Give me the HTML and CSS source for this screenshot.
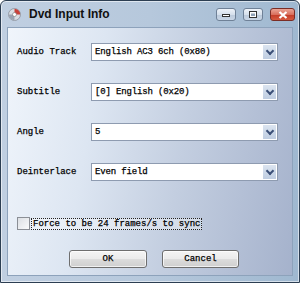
FILE: index.html
```html
<!DOCTYPE html>
<html lang="en">

<head>
    <meta charset="UTF-8">
    <meta name="viewport" content="width=device-width, initial-scale=1.0">
    <title>Dvd Input Info</title>
    <link rel="stylesheet" href="styles.css">
</head>

<body>
    <div class="window">
        <div class="titlebar">
            <svg class="app-icon" width="13" height="13" viewBox="0 0 13 13">
                <circle cx="6.5" cy="6.5" r="6" fill="#d9dde3" stroke="#8a8f99" stroke-width="0.8"/>
                <path d="M6.5 0.8 A5.7 5.7 0 0 1 12.2 6.5 L6.5 6.5 Z" fill="#c8413a"/>
                <path d="M6.5 12.2 A5.7 5.7 0 0 1 0.8 6.5 L6.5 6.5 Z" fill="#9aa3b2"/>
                <circle cx="6.5" cy="6.5" r="2" fill="#fff" stroke="#777" stroke-width="0.6"/>
            </svg>
            <span class="title">Dvd Input Info</span>
            <div class="caption-buttons">
                <span class="cap-btn">
                    <svg width="8" height="6" viewBox="0 0 8 6"><rect x="0.5" y="2.5" width="7" height="2" fill="#fff" stroke="#333" stroke-width="1"/></svg>
                </span>
                <span class="cap-btn">
                    <svg width="8" height="7" viewBox="0 0 8 7"><rect x="0.5" y="0.5" width="7" height="6" fill="#fff" stroke="#333" stroke-width="1"/><rect x="2" y="2.5" width="4" height="2.5" fill="#8fa2b8"/></svg>
                </span>
                <span class="cap-btn close">
                    <svg width="10" height="8" viewBox="0 0 10 8"><path d="M1.5 1 L8.5 7 M8.5 1 L1.5 7" stroke="#fff" stroke-width="2.2"/></svg>
                </span>
            </div>
        </div>

        <div class="client">
            <div class="fields">
                <label>Audio Track</label>
                <div class="combo"><span>English AC3 6ch (0x80)</span><span class="arrow"></span></div>

                <label>Subtitle</label>
                <div class="combo"><span>[0] English (0x20)</span><span class="arrow"></span></div>

                <label>Angle</label>
                <div class="combo"><span>5</span><span class="arrow"></span></div>

                <label>Deinterlace</label>
                <div class="combo"><span>Even field</span><span class="arrow"></span></div>
            </div>

            <div class="check-row">
                <span class="checkbox"></span>
                <span class="check-label">Force to be 24 frames/s to sync</span>
            </div>

            <div class="buttons">
                <button type="button" class="btn">OK</button>
                <button type="button" class="btn cancel">Cancel</button>
            </div>
        </div>
    </div>
</body>

</html>
```

FILE: styles.css
```css
body {
    margin: 0;
    background-color: #fff;
}

.window {
    width: 300px;
    height: 283px;
    box-sizing: border-box;
    border: 1px solid #2c3e52;
    border-radius: 6px 6px 0 0;
    background: linear-gradient(to right, #c0cfe1 0%, #b6c8dc 50%, #9fb8d0 100%);
    box-shadow: inset 0 0 0 1px rgba(255, 255, 255, 0.55);
    padding: 0 6px 6px;
    display: flex;
    flex-direction: column;
}

.titlebar {
    height: 26px;
    display: flex;
    align-items: center;
    box-sizing: border-box;
}

.app-icon {
    margin-left: 1px;
    margin-right: 8px;
}

.title {
    font-family: "Liberation Sans", Arial, sans-serif;
    font-weight: bold;
    font-size: 12px;
    color: #111;
}

.caption-buttons {
    margin-left: auto;
    display: flex;
    gap: 7px;
    margin-right: -2px;
    margin-top: 1px;
}

.cap-btn {
    width: 18px;
    height: 11px;
    border: 1px solid #6f8197;
    border-radius: 3px;
    background: linear-gradient(#eef3f9 0%, #d6e0ec 50%, #bccadb 51%, #c9d6e6 100%);
    display: flex;
    align-items: center;
    justify-content: center;
}

.cap-btn.close {
    width: 23px;
    border-color: #7a2d25;
    background: linear-gradient(#eba596 0%, #d9705e 50%, #c23a26 51%, #d65a40 100%);
}

.client {
    flex: 1;
    border: 1px solid #8da2bb;
    background: linear-gradient(100deg, #f0f5fb 0%, #dde6f2 30%, #c3cee0 60%, #a5b2cc 100%);
    padding: 15px 0 0 9px;
    font-family: "Liberation Mono", "Courier New", monospace;
    font-size: 9px;
    color: #000;
    -webkit-text-stroke: 0.25px #000;
}

.fields {
    display: grid;
    grid-template-columns: 74px 187px;
    grid-auto-rows: 18px;
    row-gap: 22px;
    align-items: center;
}

.fields label {
    white-space: pre;
}

.combo {
    height: 18px;
    box-sizing: border-box;
    border: 1px solid #8e9bb0;
    background-color: #fff;
    display: flex;
    align-items: center;
    padding-left: 3px;
    letter-spacing: -0.15px;
}

.arrow {
    margin-left: auto;
    width: 13px;
    height: 14px;
    margin-right: 1px;
    background: linear-gradient(#dbe4f0, #bfcde1);
    position: relative;
}

.arrow::after {
    content: "";
    position: absolute;
    left: 4px;
    top: 3px;
    width: 4px;
    height: 4px;
    border-right: 2px solid #3c5078;
    border-bottom: 2px solid #3c5078;
    transform: rotate(45deg);
}

.check-row {
    margin-top: 36px;
    display: flex;
    align-items: center;
}

.checkbox {
    width: 11px;
    height: 11px;
    border: 1px solid #8b8f96;
    background: linear-gradient(135deg, #dcdfe4, #fafbfc);
    margin-right: 1px;
}

.check-label {
    border: 1px dotted #222;
    padding: 0 1px;
    line-height: 10px;
    background-color: rgba(255, 255, 255, 0.35);
}

.buttons {
    margin-top: 20px;
    padding-left: 52px;
    display: flex;
    gap: 15px;
}

.btn {
    width: 78px;
    height: 18px;
    padding: 0;
    border: 1px solid #6e6e6e;
    border-radius: 3px;
    background: linear-gradient(#f4f4f4 0%, #ebebeb 48%, #dcdcdc 52%, #cfcfcf 100%);
    font-family: "Liberation Mono", "Courier New", monospace;
    font-size: 9px;
    color: #000;
    -webkit-text-stroke: 0.25px #000;
    box-shadow: inset 0 0 0 1px rgba(255, 255, 255, 0.7);
}

.btn.cancel {
    width: 77px;
}
```
